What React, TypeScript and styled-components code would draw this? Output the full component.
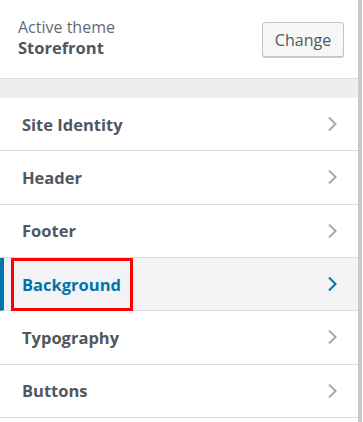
import React from "react";
import styled, { createGlobalStyle } from "styled-components";

const GlobalStyle = createGlobalStyle`
  html, body {
    margin: 0;
    padding: 0;
    background: #fff;
  }
  body {
    font-family: "Open Sans", "Noto Sans", sans-serif;
  }
`;

const Frame = styled.div`
  display: flex;
  width: 363px;
  height: 422px;
  overflow: hidden;
  background: #fff;
`;

const Panel = styled.div`
  width: 358px;
  display: flex;
  flex-direction: column;
  position: relative;
`;

const ScrollEdge = styled.div`
  width: 4px;
  background: #c9c9c9;
`;

const ThemeBar = styled.div`
  height: 79px;
  display: flex;
  align-items: center;
  justify-content: space-between;
  padding: 0 14px 0 18px;
  border-bottom: 1px solid #dcdcde;
  box-sizing: border-box;
`;

const ThemeInfo = styled.div`
  display: flex;
  flex-direction: column;
  margin-top: -2px;
`;

const ThemeLabel = styled.span`
  font-size: 16px;
  line-height: 20px;
  color: #646970;
`;

const ThemeName = styled.span`
  font-size: 16.5px;
  line-height: 22px;
  font-weight: 700;
  color: #50575e;
`;

const ChangeButton = styled.button`
  width: 82px;
  height: 35px;
  border: 1px solid #c3c4c7;
  border-radius: 3px;
  background: #f6f7f7;
  box-shadow: 0 1px 0 #ccc;
  font-family: inherit;
  font-size: 16px;
  color: #50575e;
  padding: 0;
  margin-top: 1px;
`;

const Spacer = styled.div`
  height: 19px;
  background: #eeeeee;
`;

const List = styled.ul`
  list-style: none;
  margin: 0;
  padding: 0;
`;

const Item = styled.li<{ $active?: boolean }>`
  height: 53.33px;
  box-sizing: border-box;
  display: flex;
  align-items: center;
  justify-content: space-between;
  padding: 0 20px 0 ${(p) => (p.$active ? "18px" : "22px")};
  border-bottom: 1px solid #dcdcde;
  border-left: ${(p) => (p.$active ? "4px solid #0073aa" : "none")};
  background: ${(p) => (p.$active ? "#f3f3f5" : "#fff")};
  color: ${(p) => (p.$active ? "#0073aa" : "#50575e")};
  font-size: 16.5px;
  font-weight: 700;
`;

const Chevron = styled.svg<{ $active?: boolean }>`
  width: 11px;
  height: 16px;
  color: ${(p) => (p.$active ? "#0073aa" : "#a7aaad")};
`;

const Highlight = styled.div`
  position: absolute;
  left: 11px;
  top: 258px;
  width: 122px;
  height: 53px;
  box-sizing: border-box;
  border: 3px solid #ff0000;
  pointer-events: none;
`;

const sections = ["Site Identity", "Header", "Footer", "Background", "Typography", "Buttons"];

export default function App() {
  return (
    <Frame>
      <GlobalStyle />
      <Panel>
        <ThemeBar>
          <ThemeInfo>
            <ThemeLabel>Active theme</ThemeLabel>
            <ThemeName>Storefront</ThemeName>
          </ThemeInfo>
          <ChangeButton>Change</ChangeButton>
        </ThemeBar>
        <Spacer />
        <List>
          {sections.map((name) => {
            const active = name === "Background";
            return (
              <Item key={name} $active={active}>
                {name}
                <Chevron $active={active} viewBox="0 0 11 16">
                  <path d="M2 1.5 L8.5 8 L2 14.5" fill="none" stroke="currentColor" strokeWidth="2" />
                </Chevron>
              </Item>
            );
          })}
        </List>
        <Highlight />
      </Panel>
      <ScrollEdge />
    </Frame>
  );
}
